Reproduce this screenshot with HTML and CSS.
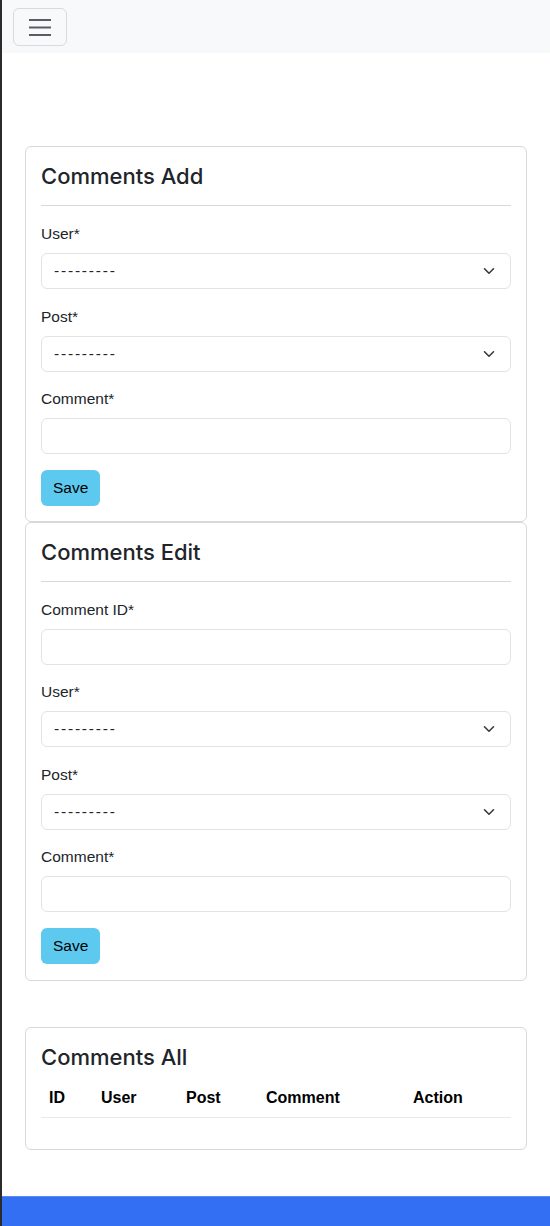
FILE: index.html
```html
<!DOCTYPE html>
<html lang="en">
<head>
<meta charset="utf-8">
<title>Comments</title>
<link rel="stylesheet" href="styles.css">
</head>
<body>
<nav class="navbar">
  <button class="toggler" type="button" aria-label="Toggle navigation">
    <svg width="24" height="18" viewBox="0 0 24 18"><path d="M1 2h22M1 9.5h22M1 17h22" stroke="#5a5c5f" stroke-width="2" fill="none"/></svg>
  </button>
</nav>
<main class="container">
  <section class="card">
    <h4 class="card-title">Comments Add</h4>
    <hr class="rule">
    <div class="field">
      <label class="label">User*</label>
      <div class="select"><span class="dash">---------</span><svg class="chev" width="12" height="8" viewBox="0 0 12 8"><path d="M1.5 1.8 6 6.2l4.5-4.4" stroke="#343a40" stroke-width="1.6" fill="none" stroke-linecap="round" stroke-linejoin="round"/></svg></div>
    </div>
    <div class="field">
      <label class="label">Post*</label>
      <div class="select"><span class="dash">---------</span><svg class="chev" width="12" height="8" viewBox="0 0 12 8"><path d="M1.5 1.8 6 6.2l4.5-4.4" stroke="#343a40" stroke-width="1.6" fill="none" stroke-linecap="round" stroke-linejoin="round"/></svg></div>
    </div>
    <div class="field last">
      <label class="label">Comment*</label>
      <div class="input"></div>
    </div>
    <button class="btn" type="button">Save</button>
  </section>
  <section class="card card-edit">
    <h4 class="card-title">Comments Edit</h4>
    <hr class="rule">
    <div class="field">
      <label class="label">Comment ID*</label>
      <div class="input"></div>
    </div>
    <div class="field">
      <label class="label">User*</label>
      <div class="select"><span class="dash">---------</span><svg class="chev" width="12" height="8" viewBox="0 0 12 8"><path d="M1.5 1.8 6 6.2l4.5-4.4" stroke="#343a40" stroke-width="1.6" fill="none" stroke-linecap="round" stroke-linejoin="round"/></svg></div>
    </div>
    <div class="field">
      <label class="label">Post*</label>
      <div class="select"><span class="dash">---------</span><svg class="chev" width="12" height="8" viewBox="0 0 12 8"><path d="M1.5 1.8 6 6.2l4.5-4.4" stroke="#343a40" stroke-width="1.6" fill="none" stroke-linecap="round" stroke-linejoin="round"/></svg></div>
    </div>
    <div class="field last">
      <label class="label">Comment*</label>
      <div class="input"></div>
    </div>
    <button class="btn" type="button">Save</button>
  </section>
  <section class="card card-all">
    <h4 class="card-title tight">Comments All</h4>
    <table class="table">
      <thead>
        <tr>
          <th class="c-id">ID</th>
          <th class="c-user">User</th>
          <th class="c-post">Post</th>
          <th class="c-comment">Comment</th>
          <th class="c-action">Action</th>
        </tr>
      </thead>
      <tbody></tbody>
    </table>
  </section>
</main>
<footer class="footer"></footer>
</body>
</html>
```
FILE: styles.css
```css
* { box-sizing: border-box; }
html, body { margin: 0; padding: 0; }
body {
  border-left: 2px solid #2b2b2b;
  background: #fff;
  color: #212529;
  font-family: "Liberation Sans", Arial, sans-serif;
  font-size: 15.5px;
  line-height: 22px;
  min-height: 1226px;
  display: flex;
  flex-direction: column;
}
.navbar {
  height: 53px;
  background: #f8f9fa;
  padding: 8px 11px;
}
.toggler {
  width: 54px;
  height: 38px;
  border: 1px solid #d9dadb;
  border-radius: 6px;
  background: transparent;
  display: flex;
  align-items: center;
  justify-content: center;
  padding: 0;
}
.container {
  padding: 93px 23px 0;
  flex: 1;
}
.card {
  border: 1px solid #d8d9da;
  border-radius: 6px;
  padding: 15px 15px 15px;
  background: #fff;
}
.card-edit { padding-bottom: 16px; }
.card-edit .field.last { margin-bottom: 16px; }
.card-all { margin-top: 46px; }
.card-title {
  margin: 0;
  font-family: Inter, "Liberation Sans", sans-serif;
  font-weight: 500;
  font-size: 22px;
  line-height: 28px;
  color: #212529;
}
.card-title.tight { margin-bottom: 8px; }
.rule {
  border: 0;
  border-top: 1px solid #d9d9da;
  margin: 15px 0 16px;
  height: 0;
}
.field { margin-bottom: 15.5px; }
.field.last { margin-bottom: 15.5px; }
.label {
  display: block;
  line-height: 23px;
  margin-bottom: 8px;
}
.select, .input {
  height: 36px;
  border: 1px solid #e1e3e6;
  border-radius: 6px;
  background: #fff;
}
.select {
  display: flex;
  align-items: center;
  justify-content: space-between;
  padding: 0 15px 0 12px;
}
.dash { letter-spacing: 1.8px; }
.chev { display: block; }
.btn {
  display: block;
  height: 36px;
  padding: 0 12px;
  border: 0;
  border-radius: 6px;
  background: #5ec9ee;
  color: #000;
  font-family: "Liberation Sans", Arial, sans-serif;
  font-size: 15.5px;
}
.table {
  width: 100%;
  border-collapse: collapse;
  margin-bottom: 16px;
}
.table th {
  text-align: left;
  font-size: 16px;
  font-weight: bold;
  line-height: 22px;
  padding: 8px 8px;
  border-bottom: 1px solid #e9eaec;
  color: #000;
}
.c-id { width: 52px; }
.c-user { width: 85px; }
.c-post { width: 80px; }
.c-comment { width: 147px; }
.footer {
  height: 30px;
  margin-top: 46px;
  background: #336ff3;
  border-top: 1px solid #5a8af2;
}
```
